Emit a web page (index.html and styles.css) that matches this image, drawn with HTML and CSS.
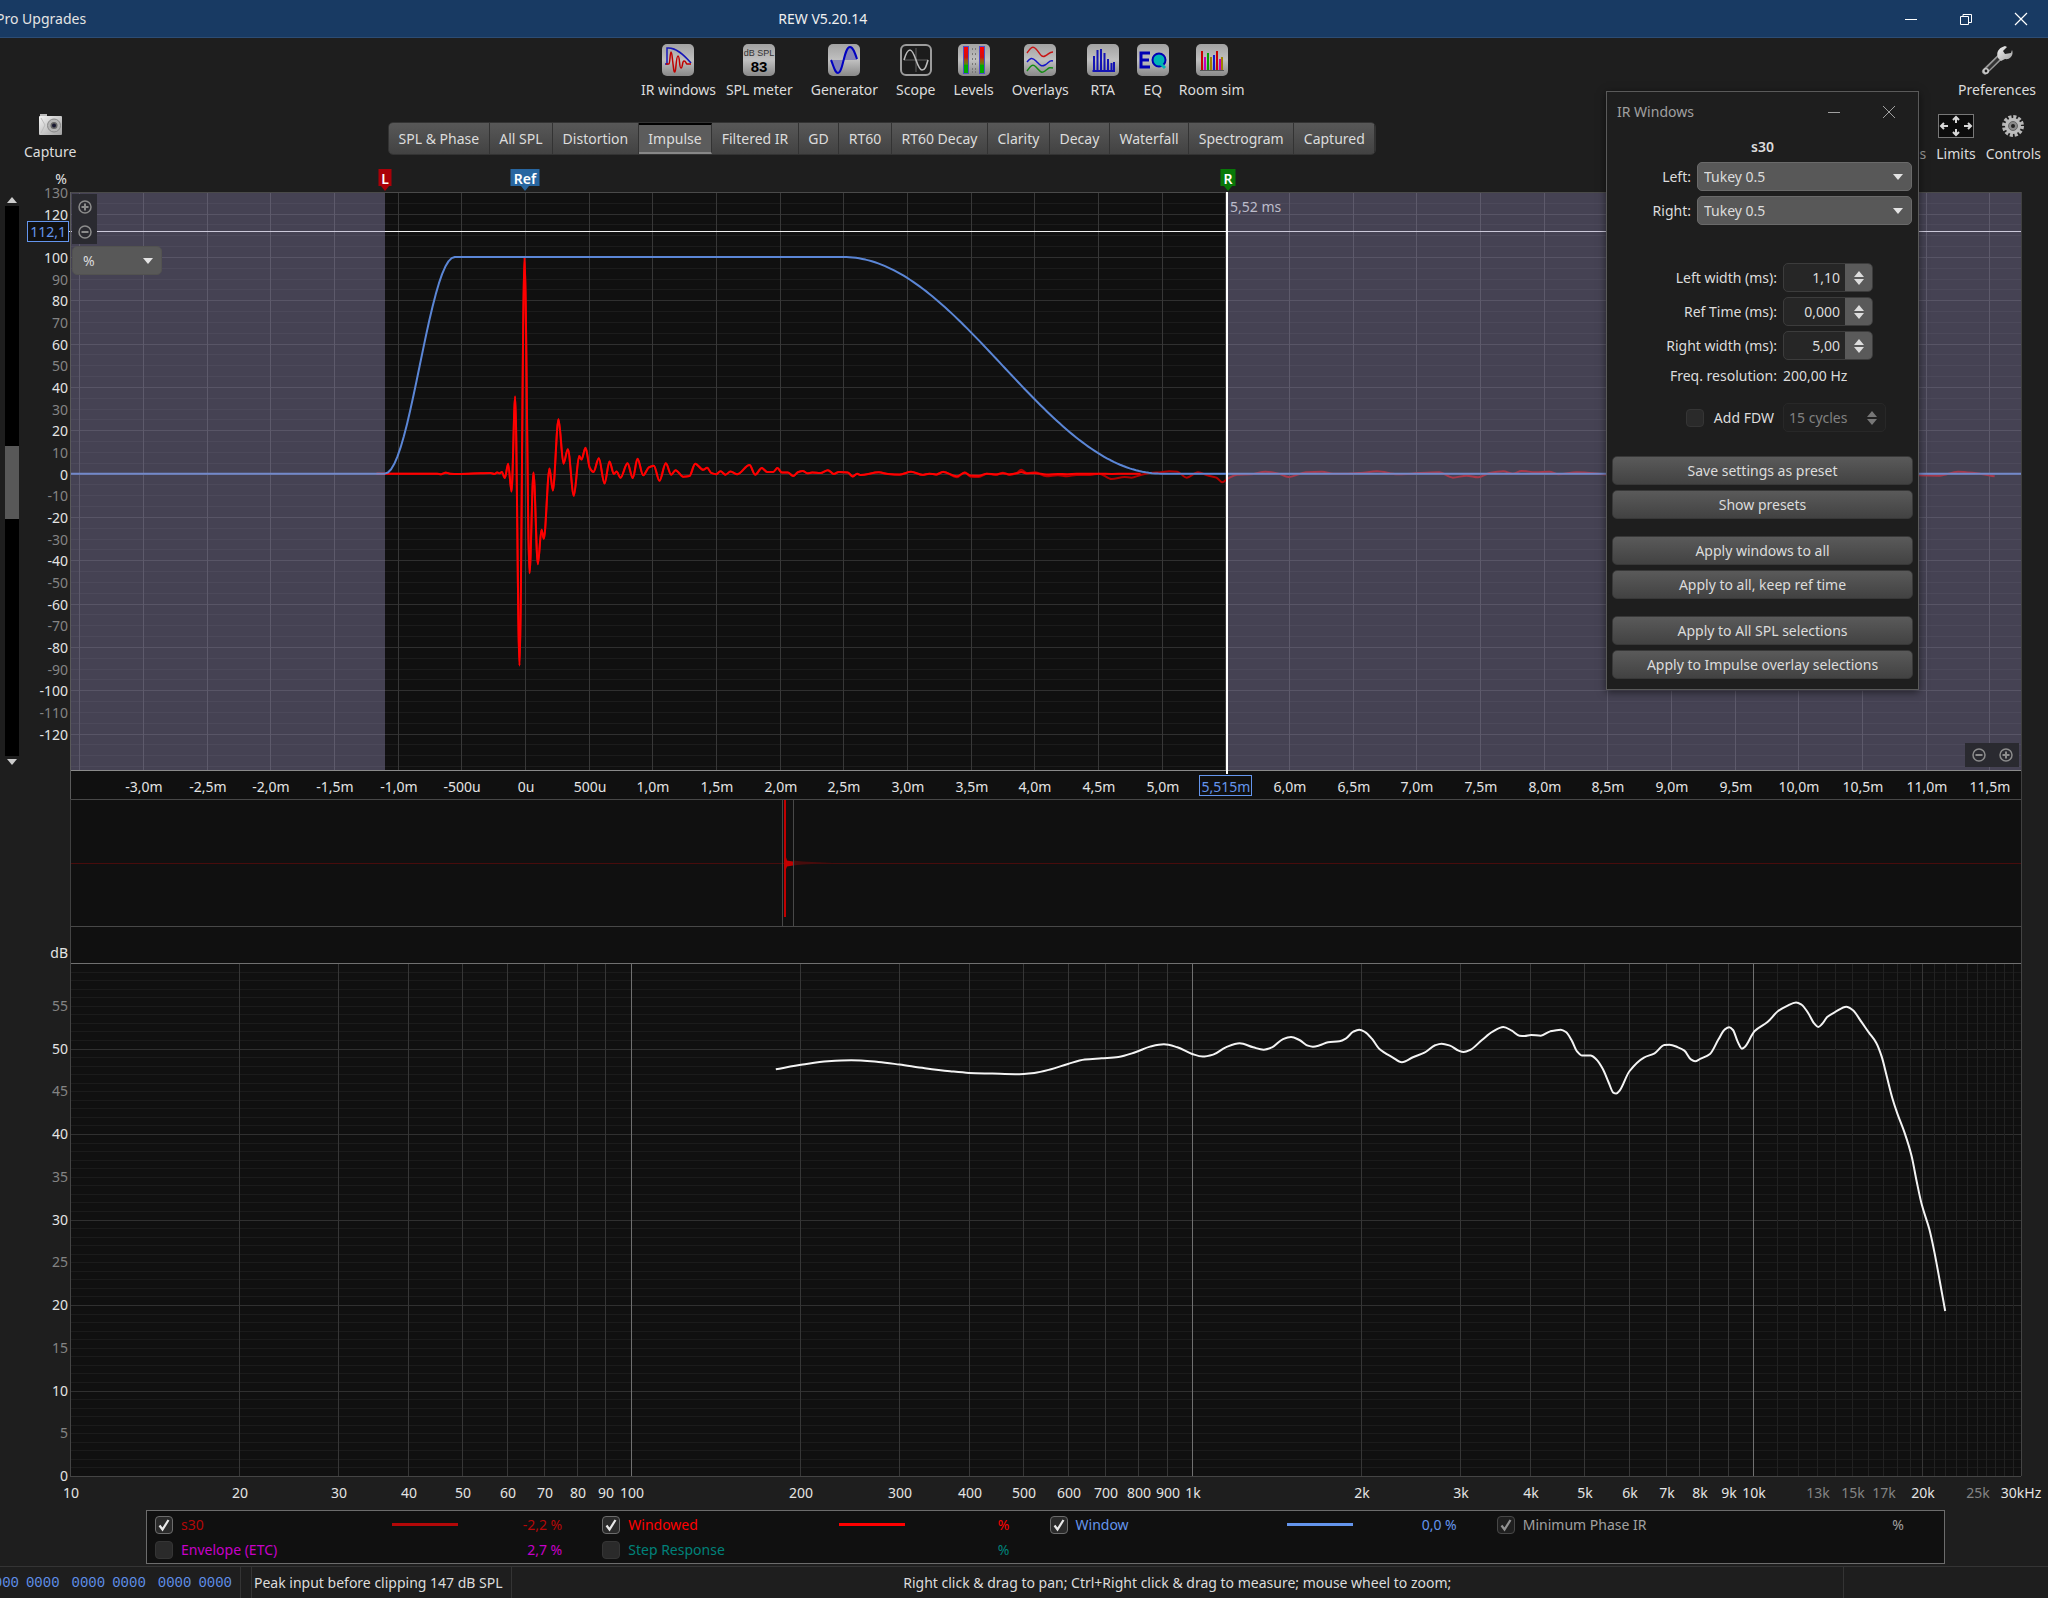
FILE: index.html
```html
<!DOCTYPE html>
<html lang="en">
<head>
<meta charset="utf-8">
<title>REW V5.20.14</title>
<link rel="stylesheet" href="styles.css">
</head>
<body>
<svg class="defs" width="0" height="0" aria-hidden="true">
  <defs>
    <linearGradient id="tile" x1="0" y1="0" x2="0" y2="1"><stop offset="0" stop-color="#a2a2a2"/><stop offset=".5" stop-color="#c0c0c0"/><stop offset="1" stop-color="#888"/></linearGradient>
    <linearGradient id="meter" x1="0" y1="0" x2="0" y2="1"><stop offset="0" stop-color="#f00"/><stop offset=".4" stop-color="#d01010"/><stop offset=".5" stop-color="#a05010"/><stop offset=".65" stop-color="#608010"/><stop offset=".7" stop-color="#0a0"/></linearGradient>
    <linearGradient id="metal" x1="0" y1="0" x2="1" y2="1"><stop offset="0" stop-color="#f4f4f4"/><stop offset="1" stop-color="#a0a0a0"/></linearGradient>
  </defs>
</svg>

<header class="titlebar">
  <a class="titlebar-menu" href="#">Pro Upgrades</a>
  <h1 class="titlebar-title">REW V5.20.14</h1>
  <div class="window-controls">
    <button aria-label="Minimise"><svg width="14" height="14"><path d="M1 7.500h12" stroke="#fff"/></svg></button>
    <button aria-label="Restore"><svg width="14" height="14" fill="none" stroke="#fff"><path d="M1.500 4.500h8v8h-8zM4 4V2.500h8.500v8H10"/></svg></button>
    <button aria-label="Close"><svg width="14" height="14"><path d="M1 1l12 12M13 1L1 13" stroke="#fff" stroke-width="1.200"/></svg></button>
  </div>
</header>

<nav class="toolbar">
  <div class="tool-groups">
    <div class="tool-group tight">
      <button class="tool"><svg width="32" height="32"><rect width="32" height="32" rx="5" fill="url(#tile)"/><path d="M3 20h2V4c9-1 17 7 24 15" fill="none" stroke="#1616b8" stroke-width="1.500"/><path d="M4 20h3c1 0 1-12 2-12s1 4 2 12 1 8 2 8 1-16 3-16 1 12 3 12 1-7 3-7 2 3 3 3h4" fill="none" stroke="#c00000" stroke-width="1.500"/></svg>IR windows</button>
      <button class="tool"><svg width="32" height="32"><rect width="32" height="32" rx="5" fill="url(#tile)"/><text class="glyph-small" x="16" y="12">dB SPL</text><text class="glyph-big" x="16" y="28">83</text></svg>SPL meter</button>
    </div>
    <div class="tool-group">
      <button class="tool"><svg width="32" height="32"><rect width="32" height="32" rx="5" fill="url(#tile)"/><path d="M3 16h13c-2 6-3 13-6 13S6 23 3 16zM16 16c2-8 3-12 6-12s5 4 7 12z" fill="#8585b4"/><path d="M3 16c3 7 4 13 7 13 5 0 6-26 12-26 3 0 5 6 7 12" fill="none" stroke="#0000c0" stroke-width="2"/></svg>Generator</button>
      <button class="tool"><svg width="32" height="32"><rect x="1" y="1" width="30" height="30" rx="5" fill="#1c1c1c" stroke="#9c9c9c" stroke-width="2"/><path d="M16 4v24M4 16h24" stroke="#606060"/><path d="M4 16C6 9 8 6 10 6c5 0 7 20 12 20 3 0 4-3 6-10" fill="none" stroke="#bbb" stroke-width="1.600"/></svg>Scope</button>
      <button class="tool"><svg width="32" height="32"><rect width="32" height="32" rx="5" fill="url(#tile)"/><rect x="5.500" y="2.500" width="5" height="27" fill="url(#meter)" stroke="#5050c8"/><rect x="21.500" y="2.500" width="5" height="27" fill="url(#meter)" stroke="#5050c8"/><path d="M14 5h4M14 10h4M14 15h4M14 20h4M14 25h4M14 28h4" stroke="#777" stroke-width="2" stroke-dasharray="1 2"/></svg>Levels</button>
      <button class="tool"><svg width="32" height="32"><rect width="32" height="32" rx="5" fill="url(#tile)"/><g fill="none" stroke-width="1.500"><path d="M3 9c3-4 5-8 9-4s5 9 9 7 4-4 8-4" stroke="#c81414"/><path d="M3 18c3-4 5-5 9-1s5 6 9 4 4-5 8-4" stroke="#1414c8"/><path d="M3 27c3-4 5-8 9-4s5 7 9 4 4-4 8-3" stroke="#148c14"/></g></svg>Overlays</button>
      <button class="tool"><svg width="32" height="32"><rect width="32" height="32" rx="5" fill="url(#tile)"/><path d="M7 27V12M10.500 27V6M14 27V5M17.500 27V9M21 27V15M24.500 27V19M27 27V18M5.500 27H28" stroke="#1414b4" stroke-width="2"/></svg>RTA</button>
      <div class="tool-group tight">
        <button class="tool"><svg width="32" height="32"><rect width="32" height="32" rx="5" fill="url(#tile)"/><path d="M13 9H4v14h9M4 16h8" fill="none" stroke="#0000b4" stroke-width="3"/><circle cx="22" cy="16" r="6.500" fill="#00b4b4" stroke="#0000b4" stroke-width="2"/><path d="M22 18l6 6" stroke="#00b4b4" stroke-width="3"/></svg>EQ</button>
        <button class="tool"><svg width="32" height="32"><rect width="32" height="32" rx="5" fill="url(#tile)"/><g stroke-width="2"><path d="M6 26V7M21 26V7" stroke="#c80000"/><path d="M9 26V13M24 26V15" stroke="#c000c0"/><path d="M12 26V9" stroke="#00a000"/><path d="M15 26V13M26 26V13" stroke="#a08000"/><path d="M18 26V11" stroke="#1414c8"/></g><path d="M4 26.500h24" stroke="#555"/></svg>Room sim</button>
      </div>
    </div>
  </div>
  <button class="tool preferences"><svg width="32" height="32"><path d="M4 27.500L19 13" stroke="#999" stroke-width="6" stroke-linecap="round"/><path d="M5 27L18 14" stroke="#333" stroke-width="3"/><circle cx="5" cy="27" r="3" fill="#ccc"/><circle cx="5" cy="27" r="1.400" fill="#1e1e1e"/><path d="M17 14c-2-5 0-10 7-12l2 1-4 4 2 3 6-1 1-3c2 5-2 10-7 9l-4 2z" fill="url(#metal)"/></svg>Preferences</button>
</nav>

<div class="subbar">
  <button class="tool"><svg width="32" height="22"><rect x="6" width="7" height="4" fill="#bbb"/><rect x="5" y="2" width="23" height="19" rx="1" fill="url(#metal)"/><path d="M7 4l4 7-4 8" fill="none" stroke="#bbb"/><circle cx="20" cy="11.500" r="6.500" fill="#b4b4b4" stroke="#888"/><circle cx="20" cy="11.500" r="3.500" fill="#666"/><circle cx="20" cy="11.500" r="2" fill="#181830"/></svg>Capture</button>
  <div class="tabs" role="tablist">
    <button role="tab">SPL &amp; Phase</button><button role="tab">All SPL</button><button role="tab">Distortion</button><button role="tab" aria-selected="true">Impulse</button><button role="tab">Filtered IR</button><button role="tab">GD</button><button role="tab">RT60</button><button role="tab">RT60 Decay</button><button role="tab">Clarity</button><button role="tab">Decay</button><button role="tab">Waterfall</button><button role="tab">Spectrogram</button><button role="tab">Captured</button>
  </div>
  <div class="view-tools">
    <span class="clipped-label">is</span>
    <button class="tool"><svg width="36" height="24"><rect x=".5" y=".5" width="35" height="23" fill="#0c0c0c" stroke="#777"/><path d="M18 9V3M15 6l3-3 3 3M18 15v6M15 18l3 3 3-3M10 12H3M6 9l-3 3 3 3M26 12h7M30 9l3 3-3 3" fill="none" stroke="#d8d8d8" stroke-width="2"/></svg>Limits</button>
    <button class="tool"><svg width="24" height="24"><circle cx="12" cy="12" r="9" fill="none" stroke="#b8b8b8" stroke-width="4" stroke-dasharray="3 1.710"/><circle cx="12" cy="12" r="8" fill="#bcbcbc"/><circle cx="12" cy="12" r="4.500" fill="#8a8a8a" stroke="#666"/><circle cx="12" cy="12" r="2" fill="#222"/></svg>Controls</button>
  </div>
</div>

<main class="charts">
  <section class="impulse" aria-label="Impulse response">
    <div class="scroller">
      <button aria-label="Scroll up"><svg width="10" height="6"><path d="M5 0l5 6H0z" fill="#ccc"/></svg></button>
      <div class="track"><div class="thumb"></div></div>
      <button aria-label="Scroll down"><svg width="10" height="6"><path d="M5 6L0 0h10z" fill="#ccc"/></svg></button>
    </div>
    <div class="plot">
      <svg id="impulse-plot"></svg>
      <div class="zoom-y">
        <button aria-label="Zoom in vertically"><svg width="14" height="14" fill="none" stroke="#8c8c8c" stroke-width="2"><circle cx="7" cy="7" r="6" stroke-width="1.500"/><path d="M3.500 7h7M7 3.500v7"/></svg></button>
        <button aria-label="Zoom out vertically"><svg width="14" height="14" fill="none" stroke="#8c8c8c" stroke-width="2"><circle cx="7" cy="7" r="6" stroke-width="1.500"/><path d="M3.500 7h7"/></svg></button>
      </div>
      <div class="unit"><div class="select"><select aria-label="Vertical unit"><option>%</option></select></div></div>
      <div class="zoom-x">
        <button aria-label="Zoom out horizontally"><svg width="14" height="14" fill="none" stroke="#8c8c8c" stroke-width="2"><circle cx="7" cy="7" r="6" stroke-width="1.500"/><path d="M3.500 7h7"/></svg></button>
        <button aria-label="Zoom in horizontally"><svg width="14" height="14" fill="none" stroke="#8c8c8c" stroke-width="2"><circle cx="7" cy="7" r="6" stroke-width="1.500"/><path d="M3.500 7h7M7 3.500v7"/></svg></button>
      </div>
    </div>
  </section>
  <section class="overview" aria-label="Overview"><svg id="overview-plot"></svg></section>
  <section class="spectrum" aria-label="Frequency response"><svg id="spectrum-plot"></svg></section>
</main>

<section class="legend" aria-label="Traces">
  <div class="trace c-s30"><input type="checkbox" id="t1" checked><label for="t1">s30</label><i class="swatch"></i><output>-2,2 %</output></div>
  <div class="trace c-windowed"><input type="checkbox" id="t2" checked><label for="t2">Windowed</label><i class="swatch"></i><output>%</output></div>
  <div class="trace c-window"><input type="checkbox" id="t3" checked><label for="t3">Window</label><i class="swatch"></i><output>0,0 %</output></div>
  <div class="trace c-minphase"><input type="checkbox" id="t4" checked disabled><label for="t4">Minimum Phase IR</label><output>%</output></div>
  <div class="trace c-envelope"><input type="checkbox" id="t5"><label for="t5">Envelope (ETC)</label><output>2,7 %</output></div>
  <div class="trace c-step"><input type="checkbox" id="t6"><label for="t6">Step Response</label><output>%</output></div>
</section>

<footer class="statusbar">
  <div class="bits"><span>000</span><span>0000</span><span class="pair">0000</span><span>0000</span><span class="pair">0000</span><span>0000</span></div>
  <div class="clip-level">Peak input before clipping 147 dB SPL</div>
  <div class="hint">Right click &amp; drag to pan; Ctrl+Right click &amp; drag to measure; mouse wheel to zoom;</div>
  <div class="memory"></div>
</footer>

<aside class="dialog" role="dialog" aria-labelledby="dialog-title">
  <header class="dialog-bar">
    <h2 id="dialog-title">IR Windows</h2>
    <button aria-label="Minimise"><svg width="12" height="14"><path d="M0 7.500h12" stroke="#a0a0a0"/></svg></button>
    <button aria-label="Close"><svg width="14" height="14"><path d="M1 1l12 12M13 1L1 13" stroke="#a0a0a0"/></svg></button>
  </header>
  <p class="measurement">s30</p>
  <div class="shape">
    <label for="left-shape">Left:</label><div class="select"><select id="left-shape"><option>Tukey 0.5</option></select></div>
    <label for="right-shape">Right:</label><div class="select"><select id="right-shape"><option>Tukey 0.5</option></select></div>
  </div>
  <div class="widths">
    <label for="left-width">Left width (ms):</label><div class="spin"><input id="left-width" value="1,10"><button aria-label="Step"><svg width="12" height="16"><path d="M6 1l5 6H1zM6 15L1 9h10z" fill="#ddd"/></svg></button></div>
    <label for="ref-time">Ref Time (ms):</label><div class="spin"><input id="ref-time" value="0,000"><button aria-label="Step"><svg width="12" height="16"><path d="M6 1l5 6H1zM6 15L1 9h10z" fill="#ddd"/></svg></button></div>
    <label for="right-width">Right width (ms):</label><div class="spin"><input id="right-width" value="5,00"><button aria-label="Step"><svg width="12" height="16"><path d="M6 1l5 6H1zM6 15L1 9h10z" fill="#ddd"/></svg></button></div>
  </div>
  <p class="resolution"><span>Freq. resolution:</span><output>200,00 Hz</output></p>
  <div class="fdw">
    <span class="fdw-check"><input type="checkbox" id="fdw"><label for="fdw">Add FDW</label></span>
    <div class="spin off"><input value="15 cycles" aria-label="FDW cycles" disabled><button aria-label="Step" disabled><svg width="12" height="16"><path d="M6 1l5 6H1zM6 15L1 9h10z" fill="#777"/></svg></button></div>
  </div>
  <div class="actions">
    <div><button>Save settings as preset</button><button>Show presets</button></div>
    <div><button>Apply windows to all</button><button>Apply to all, keep ref time</button></div>
    <div><button>Apply to All SPL selections</button><button>Apply to Impulse overlay selections</button></div>
  </div>
</aside>
<script src="charts.js"></script>
</body>
</html>
```
FILE: styles.css
```css
* { box-sizing: border-box; }
body {
  margin: 0;
  height: 100vh;
  min-height: 1000px;
  display: flex;
  flex-direction: column;
  position: relative;
  overflow-x: hidden;
  background: #1e1e1e;
  color: #dcdcdc;
  font: 14px/20px "Noto Sans", "Open Sans", sans-serif;
}
button, input, select { font: inherit; color: inherit; margin: 0; }
button { background: none; border: 0; padding: 0; }
h1, h2, p { margin: 0; font-size: 14px; font-weight: 400; }
svg { display: block; flex: none; }
.defs { position: absolute; }

.titlebar {
  flex: none;
  height: 38px;
  display: grid;
  grid-template-columns: 38% auto 1fr;
  align-items: center;
  background: #183a63;
  border-bottom: 1px solid #2c4c74;
  overflow: hidden;
}
.titlebar-menu { color: #e4e4e4; text-decoration: none; margin-left: -4px; }
.titlebar-title { color: #f0f0f0; }
.window-controls { justify-self: end; display: flex; }
.window-controls button { width: 55px; height: 36px; display: grid; place-items: center; }

.toolbar {
  flex: none;
  height: 68px;
  padding: 6px 12px 0 31.3%;
  display: flex;
  justify-content: space-between;
  align-items: flex-start;
}
.tool-groups, .tool-group { display: flex; gap: 18px; }
.tool-group.tight { gap: 10px; }
.tool { display: flex; flex-direction: column; align-items: center; gap: 4px; white-space: nowrap; }
.glyph-small { font: 9px "Liberation Sans", sans-serif; text-anchor: middle; fill: #333; }
.glyph-big { font: bold 15px "Liberation Sans", sans-serif; text-anchor: middle; fill: #000; }

.subbar {
  flex: none;
  height: 54px;
  padding: 8px 7px 0 24px;
  display: grid;
  grid-template-columns: 364px 49% 1fr;
  align-items: start;
}
.subbar .tool { gap: 6px; }
.subbar > .tool { justify-self: start; }
.tabs {
  display: flex;
  margin-top: 8px;
  border: 1px solid #333;
  border-radius: 5px;
  overflow: hidden;
}
.tabs button {
  flex: 1 0 auto;
  height: 31px;
  padding: 0 8px;
  background: linear-gradient(#585858, #424242);
  border-right: 1px solid #333;
  white-space: nowrap;
}
.tabs button[aria-selected="true"] { background: #5c5c5c; border-top: 2px solid #000; border-bottom: 2px solid #888; }
.view-tools { justify-self: end; display: flex; gap: 10px; }
.view-tools .tool:first-of-type { min-width: 38px; }
.clipped-label { margin-top: 30px; color: #999; }

.charts { flex: 1; min-height: 0; display: flex; flex-direction: column; }
.charts > section { min-height: 0; display: flex; }
.impulse { flex: 639 1 0; }
.overview { flex: 127 1 0; padding-left: 24px; }
.spectrum { flex: 584 1 0; padding-left: 24px; }
.charts section > svg, .plot > svg { flex: 1; min-width: 0; width: 100%; height: 100%; }
.plot { flex: 1; min-width: 0; position: relative; }
.scroller { width: 24px; padding: 34px 5px 31px; display: flex; flex-direction: column; }
.scroller button { height: 12px; padding-left: 2px; }
.track { flex: 1; background: #000; padding-top: 240px; }
.thumb { height: 73px; background: #585858; }
.zoom-y { position: absolute; left: 48px; top: 34px; width: 25px; height: 50px; background: #2a2a30; display: grid; place-items: center; }
.zoom-y button, .zoom-x button { display: grid; place-items: center; }
.zoom-x { position: absolute; right: 29px; bottom: 32px; width: 54px; height: 24px; background: #2a2a30; display: grid; grid-template-columns: 1fr 1fr; place-items: center; }
.unit { position: absolute; left: 48px; top: 86px; width: 90px; }

.chart-text { font: 14px "Noto Sans", "Open Sans", sans-serif; fill: #e4e4e4; }
.chart-text.dim { fill: #848484; }
.chart-text.end { text-anchor: end; }
.chart-text.mid { text-anchor: middle; }
.chart-text.blue { fill: #6495ed; }
.chart-text.flag { fill: #fff; font-weight: 600; }
.chart-text.soft { fill: #bdbcca; }

.select { position: relative; }
.select select {
  appearance: none;
  display: block;
  width: 100%;
  height: 29px;
  padding: 0 6px;
  background: #585858;
  border: 1px solid #6a6a6a;
  border-radius: 5px;
  color: #dcdcdc;
}
.unit select { padding-left: 10px; border-color: #525250; }
.select::after {
  content: "";
  position: absolute;
  right: 9px;
  top: 12px;
  border: 5px solid transparent;
  border-top: 6px solid #e4e4e4;
  border-bottom: 0;
}

input[type="checkbox"] {
  appearance: none;
  flex: none;
  width: 18px;
  height: 18px;
  background: #2a2a2a center / 14px no-repeat;
  border: 1px solid #353535;
  border-radius: 4px;
}
input[type="checkbox"]:checked {
  border-color: #6c6c6c;
  background-image: url("data:image/svg+xml,%3Csvg xmlns='http://www.w3.org/2000/svg' viewBox='0 0 14 14'%3E%3Cpath d='M2.500 7.500l3 4L11.500 2' fill='none' stroke='%23e8e8e8' stroke-width='2.200'/%3E%3C/svg%3E");
}
input[type="checkbox"]:disabled { opacity: .6; }

.legend {
  flex: none;
  height: 54px;
  margin: 0 103px 2px 146px;
  padding: 1px 0 1px 8px;
  display: grid;
  grid-template-columns: repeat(4, 1fr);
  grid-template-rows: 1fr 1fr;
  background: #101010;
  border: 1px solid #6c6c6c;
}
.trace { display: grid; grid-template-columns: 18px 203px 66px 1fr 32px; column-gap: 8px; align-items: center; }
.trace label { white-space: nowrap; }
.trace output { grid-column: 4; text-align: right; }
.swatch { height: 3px; background: currentColor; }
.c-s30 { color: #b40808; }
.c-windowed { color: #f00; }
.c-window { color: #6495ed; }
.c-minphase { color: #a0a0a0; }
.c-envelope { color: #c800c8; }
.c-step { color: #00827a; }

.statusbar {
  flex: none;
  height: 32px;
  display: grid;
  grid-template-columns: 241px 10px auto 1fr 204px;
  align-items: stretch;
  line-height: 32px;
  border-top: 1px solid #343434;
}
.bits {
  display: flex;
  justify-content: flex-end;
  gap: 7px;
  overflow: hidden;
  padding-right: 8px;
  border-right: 1px solid #343434;
  color: #5f8fe8;
  font-family: "Liberation Mono", monospace;
}
.bits .pair { margin-left: 5px; }
.clip-level { grid-column: 3; padding: 0 8px 0 2px; border: solid #343434; border-width: 0 1px; white-space: nowrap; }
.hint { text-align: center; border-right: 1px solid #343434; white-space: nowrap; }

.dialog {
  position: absolute;
  top: 91px;
  right: 129px;
  width: 313px;
  padding: 0 5px 10px;
  background: #1e1e1e;
  border: 1px solid #5a5a5a;
  box-shadow: 0 2px 8px #0008;
}
.dialog-bar { height: 40px; padding: 0 17px 0 5px; display: flex; align-items: center; gap: 42px; }
.dialog-bar h2 { margin-right: auto; color: #a0a0a0; }
.measurement { height: 26px; line-height: 30px; text-align: center; font-weight: 600; }
.shape, .widths { display: grid; gap: 5px 6px; align-items: center; }
.shape { padding-top: 4px; grid-template-columns: 79px 215px; text-align: right; }
.widths { margin-top: 38px; grid-template-columns: 165px 90px; text-align: right; }
.spin { height: 29px; display: flex; border: 1px solid #3c3c3c; border-radius: 5px; overflow: hidden; background: #262626; }
.spin input { flex: 1; width: 0; border: 0; padding: 0 5px; background: none; text-align: right; }
.spin button { width: 27px; background: #5a5a5a; display: grid; place-items: center; }
.spin.off { border-color: #282828; background: #202020; color: #808080; }
.spin.off input { text-align: left; }
.spin.off button { background: none; }
.resolution { margin-top: 6px; display: grid; grid-template-columns: 165px auto; column-gap: 6px; }
.resolution span { text-align: right; }
.fdw { margin: 17px 0 24px; display: grid; grid-template-columns: 165px 103px; column-gap: 6px; align-items: center; }
.fdw-check { display: flex; justify-content: flex-end; align-items: center; gap: 10px; padding-right: 3px; }
.actions { display: grid; gap: 17px; }
.actions div { display: grid; gap: 5px; }
.actions button { height: 29px; border: 1px solid #383838; border-radius: 5px; background: linear-gradient(#5a5a5a, #424242); }
```
FILE: charts.js
```js
const LEFT = 46;
const RIGHT_MARGIN = 27;

/* Each segment: origin and step for both axes, then alternating x, y counts. */
const impulseSegments = [
  { x0: 0, dx: 1 / 382, dy: 1 / 6.29, p: [-445,0,-263,0,-251,-2,-237,3,-225,0,-201,-1,-133,1,-103,2,-91,-1,-83,3,-75,1,-69,5,-60,-13,-50,29,-40,-52,-29,224,-16,-557,-1,629,14,-289,26,3,39,-263,50,-163,57,-189,74,15,84,-49,101,158,116,29,129,71,147,-64,163,51,170,41,182,75,195,16,206,5,222,45,239,-29,254,35,267,-1,275,6,287,-12,308,30,324,-13,338,43,355,-5,372,18,387,23,404,-21,423,30,439,-3,452,10,475,-9,494,-7,511,29,535,11,547,17,559,2,574,-2,587,7,602,-3,617,6,637,-2,674,25,691,-3,711,16,727,5,745,5,758,16,771,3,789,3,805,-7,819,4,834,8,847,1,862,3,887,2,909,10,927,-1,942,5,969,3,984,-8,997,0] },
  { x0: 2.636, dx: 1 / 277.3, dy: 1 / 6.5, p: [0,-4,40,4,60,-1,85,-3,110,6,135,-4,150,0,165,-3,180,6,210,-11,227,4,240,-9,258,-10,275,0,295,-4,310,3,325,-4,340,2,350,12,362,2,380,4,405,-8,430,-5,450,-8,470,-4,500,-4,520,0,547,-16,575,-10,590,-12,610,-4,630,2,655,4,672,7,690,6,710,-12,735,4,755,-5,775,-12,788,-26,800,-15,820,-3,850,-2,882,6,910,0,932,-10,970,4,1005,6,1030,0,1060,0,1090,2,1125,7,1170,-2,1200,0,1260,4,1290,-12,1320,-6,1345,-11,1370,2,1400,7,1420,0,1440,8,1470,4,1500,6,1520,-2,1560,4,1640,-3,1720,5,1800,-4,1880,3,1960,-5,2040,4,2110,-3,2170,8,2220,9,2260,1,2300,-5,2350,-6,2390,6,2430,1,2470,-8,2530,-4] }
];
const responseSegments = [
  { x0: 1.1934, dx: 1 / 1333, y0: 60.33, dy: -1 / 25.71, p: [86,328,150,314,210,304,265,301,330,306,380,314,440,325,500,334,545,339,600,341,655,343,700,339,740,328,780,312,820,299,860,295,900,291,940,277,975,260,1008,253,1040,262,1075,282,1100,290,1125,284,1155,262,1188,250,1220,262,1245,269,1265,262,1290,238,1310,231,1330,240,1350,257,1362,260,1378,256,1398,247,1425,244,1440,236,1458,215,1472,209,1486,216,1502,236,1520,267] },
  { x0: 2.3342, dx: 1 / 1316.7, y0: 60.33, dy: -1 / 25.71, p: [30,292,52,307,78,292,105,278,130,256,145,251,165,257,185,272,197,276,212,270,240,240,265,215,290,201,310,212,328,227,340,228,355,225,378,227,400,214,425,209,437,216,450,240,463,274,475,287,495,287,508,298,523,326,538,370,548,398,555,401,563,392,586,334,620,293,645,280,668,255,680,254,700,262,715,272,730,298,740,304,752,297,775,282,795,238,810,208,820,202,829,210,840,245,850,266,856,262,880,213,910,186,935,153,955,138,977,127,990,134,1005,158,1020,191,1029,201,1038,192,1050,171,1070,155,1095,140,1110,150,1130,185,1148,218,1165,248,1178,290,1190,350,1203,415,1215,462,1232,520,1248,588,1260,665,1272,735,1290,810,1302,880,1315,970,1327,1055] }
];

function unpack(segments) {
  const out = [];
  for (const s of segments)
    for (let i = 0; i < s.p.length; i += 2)
      out.push([s.x0 + s.p[i] * s.dx, (s.y0 || 0) + s.p[i + 1] * s.dy]);
  return out;
}

/* Monotone cubic path through screen points. */
function curve(pts) {
  const n = pts.length, d = [], m = [];
  for (let i = 0; i < n - 1; i++) d.push((pts[i + 1][1] - pts[i][1]) / (pts[i + 1][0] - pts[i][0]));
  for (let i = 0; i < n; i++) {
    const a = d[i - 1], b = d[i];
    m.push(a === undefined ? b : b === undefined ? a : a * b <= 0 ? 0 : 2 * a * b / (a + b));
  }
  let path = `M${pts[0][0].toFixed(2)} ${pts[0][1].toFixed(2)}`;
  for (let i = 1; i < n; i++) {
    const [x0, y0] = pts[i - 1], [x1, y1] = pts[i], h = (x1 - x0) / 3;
    path += `C${[x0 + h, y0 + m[i - 1] * h, x1 - h, y1 - m[i] * h, x1, y1].map(v => v.toFixed(2)).join(" ")}`;
  }
  return path;
}

const crisp = v => Math.round(v) + 0.5;
const hLine = (y, x0, x1, c) => `<path d="M${x0} ${crisp(y)}H${x1}" stroke="${c}"/>`;
const vLine = (x, y0, y1, c) => `<path d="M${crisp(x)} ${y0}V${y1}" stroke="${c}"/>`;
const rect = (x, y, w, h, c, extra = "") => `<rect x="${x}" y="${y}" width="${w}" height="${h}" fill="${c}" ${extra}/>`;
const text = (x, y, s, cls = "") => `<text class="chart-text ${cls}" x="${Math.round(x)}" y="${Math.round(y)}">${s}</text>`;
const stroke = (path, c, w) => `<path d="${path}" fill="none" stroke="${c}" stroke-width="${w}" stroke-linejoin="round"/>`;

/* Tukey 0.5 on both sides of the reference. */
function tukey(t) {
  if (t <= -1.1 || t >= 5) return 0;
  if (t < -0.55) return 0.5 - 0.5 * Math.cos(Math.PI * (t + 1.1) / 0.55);
  if (t <= 2.5) return 1;
  return 0.5 + 0.5 * Math.cos(Math.PI * (t - 2.5) / 2.5);
}

function drawImpulse() {
  const svg = document.getElementById("impulse-plot");
  const { width: W, height: H } = svg.getBoundingClientRect();
  const right = W - RIGHT_MARGIN, top = 32, bottom = H - 29;
  const T0 = -3.572, T1 = 11.75;
  const x = t => LEFT + (t - T0) / (T1 - T0) * (right - LEFT);
  const y = v => top + (130 - v) / 266.8 * (bottom - top);
  let s = rect(LEFT, top, right - LEFT, H - top, "#101010");
  for (let v = 125; v > -136; v -= 5) s += hLine(y(v), LEFT, right, v % 20 ? "#1c1c1c" : "#303030");
  for (let k = -7; k <= 23; k++) s += vLine(x(k / 2), top, bottom, "#383838");
  s += hLine(y(112.1), LEFT - 2, right, "#f0f0f0");

  const ir = unpack(impulseSegments).filter(([t]) => t <= T1);
  s += stroke(curve(ir.map(([t, v]) => [x(t), y(v)])), "#b40000", 2);
  s += stroke(curve(ir.filter(([t]) => t < 4.9).map(([t, v]) => [x(t), y(v * tukey(t))])), "#ff0000", 2);

  const shade = "rgba(149,143,186,.4)";
  const xl = Math.round(x(-1.1)), xr = Math.round(x(5.515));
  let win = `M${LEFT} ${y(0)}`;
  for (let t = -1.1; t <= 5.01; t += 0.025) win += `L${x(t).toFixed(2)} ${y(100 * tukey(t)).toFixed(2)}`;
  win += `H${right}`;
  s += stroke(win, "#5b86d6", 2);
  s += rect(LEFT, top, xl - LEFT, bottom - top, shade) + rect(xr, top, right - xr, bottom - top, shade);
  s += hLine(top, LEFT, right, "#4a4a4a") + hLine(bottom, LEFT, right, "#8a8a8a");
  s += vLine(LEFT, top, H, "#5a5a5a") + vLine(right, top, H, "#404040");
  s += rect(xr - 1, top, 2, bottom - top + 4, "#fff");

  s += text(43, 24, "%", "end");
  for (let v = 130; v >= -120; v -= 10)
    if (v !== 110) s += text(44, y(v) + 6, v, v % 20 ? "end dim" : "end");
  s += rect(3.5, crisp(y(112.1)) - 10, 41, 20, "#101010", 'stroke="#6495ed"') + text(42, y(112.1) + 6, "112,1", "end blue");
  for (let k = -6; k <= 23; k++) {
    if (k === 11) continue;
    const label = Math.abs(k) === 1 ? `${k * 500}u` : k === 0 ? "0u" : `${(k / 2).toFixed(1).replace(".", ",")}m`;
    s += text(x(k / 2) + 1, H - 7, label, "mid");
  }
  s += rect(xr - 27.5, bottom + 5.5, 52, 20, "#101010", 'stroke="#6495ed"') + text(xr - 1, H - 7, "5,515m", "mid blue");
  s += text(xr + 3, top + 20, "5,52 ms", "soft");

  const flag = (cx, w, c, label) =>
    `<path d="M${cx - w / 2} 9h${w}v17h${4 - w / 2}l-4 5-4-5h${4 - w / 2}z" fill="${c}"/>` + text(cx, 24, label, "mid flag");
  s += flag(xl, 13, "#aa0008", "L") + flag(Math.round(x(0)), 29, "#2866a0", "Ref") + flag(xr + 1, 15, "#087808", "R");
  svg.innerHTML = s;
}

function drawOverview() {
  const svg = document.getElementById("overview-plot");
  const { width: W, height: H } = svg.getBoundingClientRect();
  const right = W - RIGHT_MARGIN, mid = H / 2;
  const at = f => LEFT + f * (right - LEFT);
  let s = rect(LEFT, 0, right - LEFT, H, "#101010") + hLine(0, LEFT, right, "#484848");
  s += hLine(mid, LEFT, right, "#480c0c");
  const px = Math.round(at(0.3665));
  s += `<path d="M${px + 8} ${mid - 2}l10 1 30 1.500-30 1.500-10 1z" fill="#480c0c"/>`;
  s += vLine(at(0.365), 0, H, "#484848") + vLine(at(0.3705), 0, H, "#484848");
  s += rect(px - 1, 1, 2, H - 10, "#c00000") + `<path d="M${px - 1} ${mid - 12}l3 10 6 1v4l-6 1-3 8z" fill="#c00000"/>`;
  s += vLine(LEFT, 0, H, "#404040") + vLine(right, 0, H, "#404040");
  svg.innerHTML = s;
}

function drawSpectrum() {
  const svg = document.getElementById("spectrum-plot");
  const { width: W, height: H } = svg.getBoundingClientRect();
  const right = W - RIGHT_MARGIN, top = 37, bottom = H - 34;
  const x = d => LEFT + d / (3 + Math.log10(3)) * (right - LEFT);
  const fx = f => x(Math.log10(f / 10));
  const y = v => bottom - v / 60 * (bottom - top);
  let s = rect(LEFT, 0, right - LEFT, bottom, "#101010") + hLine(0, LEFT, right, "#484848");
  for (let v = 1; v < 60; v++) s += hLine(y(v), LEFT, right, v % 10 ? "#1b1b1b" : "#303030");
  for (let f = 11000; f < 30000; f += 1000) s += vLine(fx(f), top, bottom, "#222");
  for (const dec of [10, 100, 1000, 10000])
    for (let k = 1; k < 10; k++)
      if (dec * k > 10 && dec * k < 30000) s += vLine(fx(dec * k), top, bottom, k === 1 ? "#707070" : "#363636");
  s += hLine(top, LEFT, right, "#707070") + hLine(bottom, LEFT, right, "#444");
  s += vLine(LEFT, 0, bottom, "#444") + vLine(right, 0, bottom, "#444");
  s += stroke(curve(unpack(responseSegments).map(([d, v]) => [x(d), y(v)])), "#f4f4f4", 2);

  s += text(44, 32, "dB", "end");
  for (let v = 0; v <= 55; v += 5) s += text(44, y(v) + 5, v, v % 10 ? "end dim" : "end");
  const labels = [];
  for (const dec of [10, 100, 1000, 10000])
    for (let k = 1; k < 10 && dec * k <= 20000; k++) labels.push([dec * k, 0]);
  for (const f of [13000, 15000, 17000, 25000]) labels.push([f, 1]);
  for (const [f, dim] of labels)
    s += text(fx(f) + 1, bottom + 22, f >= 1000 ? `${f / 1000}k` : f, dim ? "mid dim" : "mid");
  s += text(right, bottom + 22, "30kHz", "mid");
  svg.innerHTML = s;
}

function draw() {
  drawImpulse();
  drawOverview();
  drawSpectrum();
}
draw();
window.addEventListener("resize", draw);
```
